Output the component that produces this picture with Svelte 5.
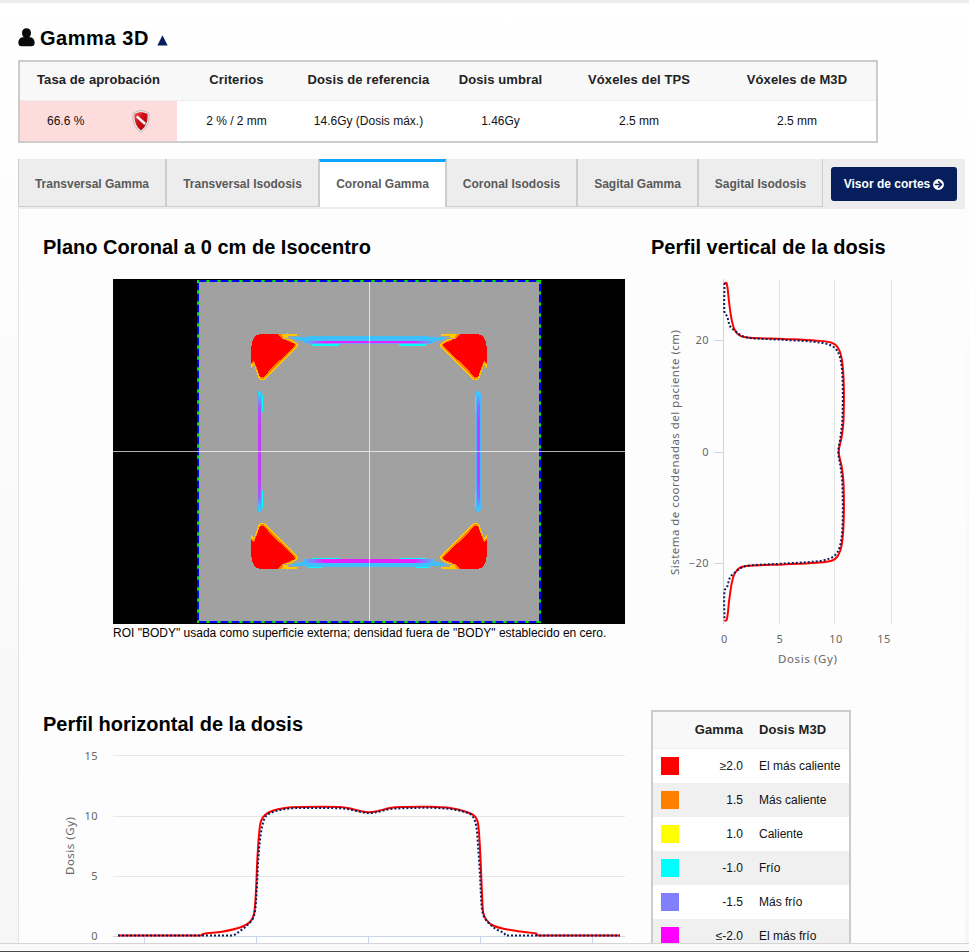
<script>
  const summary = [
    { head: 'Tasa de aprobación', value: '66.6 %', width: 157 },
    { head: 'Criterios', value: '2 % / 2 mm', width: 119 },
    { head: 'Dosis de referencia', value: '14.6Gy (Dosis máx.)', width: 145 },
    { head: 'Dosis umbral', value: '1.46Gy', width: 119 },
    { head: 'Vóxeles del TPS', value: '2.5 mm', width: 158 },
    { head: 'Vóxeles de M3D', value: '2.5 mm', width: 158 }
  ];

  const tabs = [
    { label: 'Transversal Gamma', width: 148 },
    { label: 'Transversal Isodosis', width: 153 },
    { label: 'Coronal Gamma', width: 127 },
    { label: 'Coronal Isodosis', width: 131 },
    { label: 'Sagital Gamma', width: 121 },
    { label: 'Sagital Isodosis', width: 125 }
  ];
  let active = $state(2);

  const legend = [
    { color: '#ff0000', gamma: '≥2.0', dose: 'El más caliente' },
    { color: '#ff8000', gamma: '1.5', dose: 'Más caliente' },
    { color: '#ffff00', gamma: '1.0', dose: 'Caliente' },
    { color: '#00ffff', gamma: '-1.0', dose: 'Frío' },
    { color: '#8080ff', gamma: '-1.5', dose: 'Más frío' },
    { color: '#ff00ff', gamma: '≤-2.0', dose: 'El más frío' }
  ];

  // Smooth curve through the points; handles are limited to a third of each segment.
  function curve(p) {
    const dir = (i) => {
      const a = p[Math.max(0, i - 1)];
      const b = p[Math.min(p.length - 1, i + 1)];
      const l = Math.hypot(b[0] - a[0], b[1] - a[1]) || 1;
      return [(b[0] - a[0]) / l, (b[1] - a[1]) / l];
    };
    let d = `M${p[0]}`;
    for (let i = 0; i < p.length - 1; i++) {
      const a = p[i], b = p[i + 1];
      const len = Math.hypot(b[0] - a[0], b[1] - a[1]);
      if (len > 60 && Math.abs(a[1] - b[1]) < 0.1) { d += `L${b}`; continue; }
      const s = len / 3, u = dir(i), v = dir(i + 1);
      d += `C${a[0] + u[0] * s},${a[1] + u[1] * s} ${b[0] - v[0] * s},${b[1] - v[1] * s} ${b}`;
    }
    return d;
  }

  const mirrorY = (half, c) => [...half, ...half.slice(0, -1).reverse().map(([x, y]) => [x, 2 * c - y])];

  const vCalc = curve(mirrorY([[724.3, 282.7], [726.7, 283.3], [729, 301.7], [731.7, 320], [734.5, 329.5], [740, 335.7], [750, 337.7], [783, 339], [816.7, 340.7], [831.7, 342.7], [837.7, 347.3], [841.7, 358.3], [843.7, 383.3], [843.5, 420], [841.7, 436.7], [838.7, 451.7]], 451.7));
  const vPlan = curve(mirrorY([[724.5, 283], [724.5, 313], [727, 316], [730, 326], [735, 331], [742, 336], [750, 338], [783, 339.8], [816, 342], [830, 345], [837, 350.5], [841, 362], [842.7, 384], [842.3, 420], [840.5, 437], [838.3, 451.7]], 451.7));
  const hCalc = curve([[118, 935.5], [200.7, 935.5], [203, 934], [222, 931.7], [240, 927.5], [250, 922], [254, 914], [256, 890], [257.3, 860], [259, 835], [261, 821], [265, 815], [272, 811], [285, 808], [300, 807], [340, 807], [350, 808.5], [360, 811], [369, 812.3], [378, 811], [390, 808], [402, 807], [430, 806.8], [450, 808], [465, 811.5], [474, 815.5], [477.5, 821], [479.5, 840], [481, 870], [482.3, 900], [483.3, 913], [486.5, 920], [493, 925.5], [505, 929], [520, 931.5], [536, 933.5], [538, 935.5], [620, 935.5]]);
  const hPlan = curve([[118, 935.5], [232, 935.5], [240, 931], [248, 924.5], [254, 916], [256.7, 890], [258.2, 860], [260, 840], [262.5, 825], [266, 816], [273, 812], [285, 809], [300, 808], [340, 808.3], [350, 809.5], [360, 811.8], [369, 813], [378, 811.8], [390, 809], [402, 808.3], [430, 807.8], [450, 809], [465, 812], [472, 815.5], [476, 825], [478, 845], [480, 875], [481.5, 905], [483, 914], [486, 920], [495, 928.5], [504, 933], [506, 935.5], [620, 935.5]]);

  const quadrants = [
    '', 'translate(738 0) scale(-1 1)', 'translate(0 903) scale(1 -1)', 'translate(738 903) scale(-1 -1)'
  ];
</script>

<div class="page">
  <div class="strip"></div>
  <main>
    <h1>
      <svg width="17" height="19" viewBox="0 0 17 19"><path d="M8.500.3C11.300.3 13 2.200 13 5c0 1.800-.7 3.400-1.900 4.300 3.900-.4 5.500 2.300 5.500 5.600 0 2.100-1.200 3.300-3.100 3.300h-10C1.600 18.200.4 17 .4 14.900c0-3.300 1.600-6 5.500-5.600C4.700 8.400 4 6.800 4 5 4 2.200 5.700.3 8.500.3z" /></svg>
      <span>Gamma 3D</span>
      <svg class="up" width="11" height="11" viewBox="0 0 11 11"><path d="M5.500 0.300L10.600 10.500H.4z" fill="#061f5c" /></svg>
    </h1>

    <table class="summary">
      <thead><tr>{#each summary as c}<th style="width:{c.width}px">{c.head}</th>{/each}</tr></thead>
      <tbody><tr>
        {#each summary as c, i}
          {#if i === 0}
            <td class="fail"><div><span>{c.value}</span>
              <svg width="18" height="23" viewBox="0 0 18 23">
                <defs><linearGradient id="sh" x1="0" y1="0" x2="1" y2="1"><stop offset="0" stop-color="#ee5a5a" /><stop offset=".4" stop-color="#cf1018" /><stop offset="1" stop-color="#a80008" /></linearGradient></defs>
                <path d="M9 .7C11.500.7 13.700 1.300 17 3.300c.5 8-1 14.200-8 19C2 17.500.5 11.300 1 3.300 4.300 1.300 6.500.7 9 .7z" fill="#eee" stroke="#b5b5b5" stroke-width=".9" />
                <path d="M9 2.300c2.300 0 4.300.5 6.600 1.800.2 7-1.300 12.300-6.600 16.500C3.700 16.400 2.200 11.100 2.400 4.100 4.700 2.800 6.700 2.300 9 2.300z" fill="url(#sh)" />
                <path d="M4.800 6.300L13.200 14" stroke="#fff" stroke-width="2.500" />
              </svg></div></td>
          {:else}<td>{c.value}</td>{/if}
        {/each}
      </tr></tbody>
    </table>

    <nav>
      {#each tabs as t, i}
        <button class="tab" class:active={i === active} style="width:{t.width}px" onclick={() => (active = i)}>{t.label}</button>
      {/each}
      <button class="viewer">Visor de cortes
        <svg width="11" height="11" viewBox="0 0 11 11"><circle cx="5.500" cy="5.500" r="5.400" fill="#fff" /><path d="M1.800 5.500H8M5.200 2.300L8.400 5.500 5.200 8.700" fill="none" stroke="#061f5c" stroke-width="1.600" /></svg>
      </button>
    </nav>

    <section>
      <div class="left">
        <h2>Plano Coronal a 0 cm de Isocentro</h2>
        <svg class="plane" width="512" height="345" viewBox="113 279 512 345">
          <defs>
            <linearGradient id="hm" x1="0" x2="1"><stop offset="0" stop-color="#40bfff" /><stop offset=".16" stop-color="#f01cff" /><stop offset=".5" stop-color="#d829ff" /><stop offset=".84" stop-color="#f01cff" /><stop offset="1" stop-color="#40bfff" /></linearGradient>
            <linearGradient id="vm" x1="0" y1="0" x2="0" y2="1"><stop offset="0" stop-color="#20dfff" /><stop offset=".12" stop-color="#9c62ff" /><stop offset=".25" stop-color="#c03fff" /><stop offset=".75" stop-color="#c03fff" /><stop offset=".88" stop-color="#9c62ff" /><stop offset="1" stop-color="#20dfff" /></linearGradient>
          </defs>
          <rect x="113" y="279" width="512" height="345" fill="#000" />
          <rect x="198" y="281" width="342" height="341" fill="#a1a1a1" />
          <g fill="none" stroke-width="2">
            <rect x="198" y="281" width="342" height="341" stroke="#00e800" />
            <g stroke="#004c80" stroke-dasharray="8 3" stroke-dashoffset=".5">
              <path d="M199 281H540M199 622H540" /><path d="M198 283V622M540 284V622" />
            </g>
            <g stroke="#0000ff" stroke-dasharray="7 4">
              <path d="M199 281H540M199 622H540" /><path d="M198 283V622M540 284V622" />
            </g>
          </g>
          <g shape-rendering="crispEdges">
            {#each quadrants as q}
              <g transform={q}>
                <path fill="#ffc800" d="M260 334H287V333H288V334H297V336H288V338H284V339H290L297 343L298 345L297 348L264 380H260L258 377L254 364L252 368H251V350L252 342L255 336z" />
                <path fill="#ff8000" d="M260 334H281L283 337V339L289 340L296 344V347L263 379H261L256 368L254 363L252 364H251V350L252 342L255 336z" />
                <path fill="#f00" d="M260 334H278L281 338L288 341L295 344L294 347L280 360L272 367L264 377H260L256 366L254 361L251 363V350L252 342L255 336z" />
              </g>
            {/each}
            {#each quadrants as q}
              <g transform={q}>
                <path fill="#00ffff" d="M308 335.500h14v1h-14zM312 344h27v1.500h-27z" />
              </g>
            {/each}
            {#each [quadrants[0], quadrants[2]] as q}
              <g transform={q}>
                <path fill="#40bfff" d="M292 337L308 337V336H430V337L446 337V339L436 341L430 344H308L302 341L292 339z" />
                <rect x="304" y="341" width="130" height="2" fill="url(#hm)" />
                <rect x="310" y="343" width="118" height="1" fill="#8095ff" />
              </g>
            {/each}
            <rect x="304" y="559" width="130" height="4" fill="url(#hm)" />
            {#each quadrants.slice(0, 2) as q}
              <g transform={q}>
                <path d="M257 394L258 391H261L262 394V509L261 512H258L257 509z" fill="#46b9ff" />
                <rect x="258" y="392" width="3" height="119" fill="url(#vm)" />
                <path fill="#00ffff" d="M262 395h1v17h-1zM262 491h1v17h-1z" />
              </g>
            {/each}
          </g>
          <path d="M113 451.500H625M369.500 282V621" stroke="#fff" stroke-opacity=".7" />
        </svg>
        <p>ROI "BODY" usada como superficie externa; densidad fuera de "BODY" establecido en cero.</p>
        <h2 class="second">Perfil horizontal de la dosis</h2>
        <svg class="chart horizontal" width="582" height="203" viewBox="43 740 582 203">
          <path d="M113 755.500H625M113 816.500H625M113 876.500H625" stroke="#e6e6e6" />
          <path d="M113 936.500H625M144.500 936V946M256.500 936V946M368.500 936V946M480.500 936V946M592.500 936V946" stroke="#ccd6eb" />
          <path d={hCalc} class="calc" /><path d={hPlan} class="plan" />
          <text x="98" y="760" text-anchor="end">15</text><text x="98" y="820" text-anchor="end">10</text>
          <text x="98" y="880" text-anchor="end">5</text><text x="98" y="940" text-anchor="end">0</text>
          <text class="title" transform="translate(74 875) rotate(-90)" textLength="58">Dosis (Gy)</text>
        </svg>
      </div>
      <div class="right">
        <h2>Perfil vertical de la dosis</h2>
        <svg class="chart" width="260" height="400" viewBox="651 270 260 400">
          <path d="M779.500 279V624M834.500 279V624M891.500 279V624" stroke="#e6e6e6" />
          <path d="M723.500 279V624M714 340.500H724M714 452.500H724M714 563.500H724" stroke="#ccd6eb" />
          <path d={vCalc} class="calc" /><path d={vPlan} class="plan" />
          <text x="709" y="344" text-anchor="end">20</text><text x="709" y="456" text-anchor="end">0</text><text x="709" y="567" text-anchor="end">−20</text>
          <text x="724.500" y="643" text-anchor="middle">0</text><text x="780" y="643" text-anchor="middle">5</text><text x="836" y="643" text-anchor="middle">10</text><text x="884" y="643" text-anchor="middle">15</text>
          <text class="title" x="778" y="663" textLength="59">Dosis (Gy)</text>
          <text class="title" transform="translate(679 575) rotate(-90)" textLength="245">Sistema de coordenadas del paciente (cm)</text>
        </svg>
        <table class="legend">
          <thead><tr><th></th><th class="g">Gamma</th><th class="d">Dosis M3D</th></tr></thead>
          <tbody>
            {#each legend as l}
              <tr><td class="s"><i style="background:{l.color}"></i></td><td class="g">{l.gamma}</td><td class="d">{l.dose}</td></tr>
            {/each}
          </tbody>
        </table>
      </div>
    </section>
  </main>
  <footer></footer>
</div>

<style>
  :global(body) { margin: 0; overflow: hidden; }
  .page { width: 969px; height: 952px; overflow: hidden; display: flex; flex-direction: column; font: 12px/16px "Liberation Sans", Arial, sans-serif; color: #111; }
  .strip { height: 3px; flex: none; background: #ebebeb; }
  main { height: 940px; flex: none; box-sizing: border-box; overflow: hidden; padding-left: 18px; background: linear-gradient(#fff, #f6f6f6); }
  footer { height: 9px; flex: none; box-sizing: border-box; border-top: 1px solid #d5d5d5; border-bottom: 1px solid #48484c; background: #fafafa; }
  svg { display: block; }
  h1 { margin: 0; padding-top: 23px; height: 34px; display: flex; align-items: flex-start; font-size: 20px; line-height: 24px; color: #000; }
  h1 span { margin-left: 5px; letter-spacing: .55px; }
  h1 svg { margin-top: 2px; fill: #0a0a0a; }
  h1 .up { margin: 9px 0 0 8px; }
  table { border-collapse: separate; border-spacing: 0; box-sizing: border-box; border: 2px solid #ccc; table-layout: fixed; background: #fff; }
  th, td { padding: 0; box-sizing: border-box; }
  th { font-size: 13px; letter-spacing: .1px; background: #f8f8f8; border-bottom: 1px solid #eee; color: #222; }
  .summary { width: 860px; height: 83px; text-align: center; }
  .summary th { height: 39px; padding-bottom: 3px; }
  .summary td { height: 40px; }
  .summary .fail { background: #ffdcdc; }
  .fail div { display: flex; align-items: center; padding-left: 27px; }
  .fail svg { margin-left: 48px; }
  nav { margin-top: 16px; width: 947px; height: 50px; background: #ededed; display: flex; align-items: flex-start; }
  button { font: bold 12px/16px "Liberation Sans", Arial, sans-serif; padding: 0; border: 0; margin: 0; }
  .tab { flex: none; box-sizing: border-box; height: 48px; background: #ededed; color: #5a5a5a; border: 1px solid #ccc; border-top: 0; padding-top: 2px; }
  .tab.active { background: #fff; border-top: 3px solid #0aa4fa; border-bottom: 0; padding: 0 0 1px; }
  .viewer { margin: 8px 0 0 8px; width: 126px; height: 34px; background: #061f5c; color: #fff; border-radius: 3px; display: flex; align-items: center; justify-content: center; gap: 3px; white-space: nowrap; }
  section { width: 946px; height: 734px; border-left: 1px solid #e3e3e3; background: #fdfdfd; display: flex; }
  .left { padding-left: 24px; width: 608px; box-sizing: content-box; }
  .right { flex: 1; }
  h2 { margin: 0; padding-top: 26px; font-size: 20px; line-height: 24px; height: 24px; color: #000; white-space: nowrap; }
  .plane { margin: 20px 0 0 70px; }
  p { margin: 1px 0 0 70px; white-space: nowrap; color: #000; }
  .second { padding-top: 71px; }
  .horizontal { margin-top: 4px; }
  .right .chart { margin-top: 11px; }
  .chart text { font: 11px "Noto Sans", "Open Sans", sans-serif; fill: #666; letter-spacing: .5px; }
  .chart .title { font-size: 11.500px; letter-spacing: 0; }
  .calc { fill: none; stroke: #f00; stroke-width: 2; }
  .plan { fill: none; stroke: #0b1f5c; stroke-width: 2; stroke-dasharray: 2 2; }
  .legend { width: 200px; margin-top: 40px; }
  .legend th { height: 37px; padding-bottom: 1px; }
  .legend td { height: 34px; }
  .legend tbody tr:nth-child(even) { background: #f0f0f0; }
  .legend .s, .legend th:first-child { width: 34px; }
  .legend i { display: block; width: 18px; height: 18px; margin-left: 8px; }
  .legend .g { width: 56px; text-align: right; }
  .legend .d { padding-left: 16px; text-align: left; white-space: nowrap; }
</style>
